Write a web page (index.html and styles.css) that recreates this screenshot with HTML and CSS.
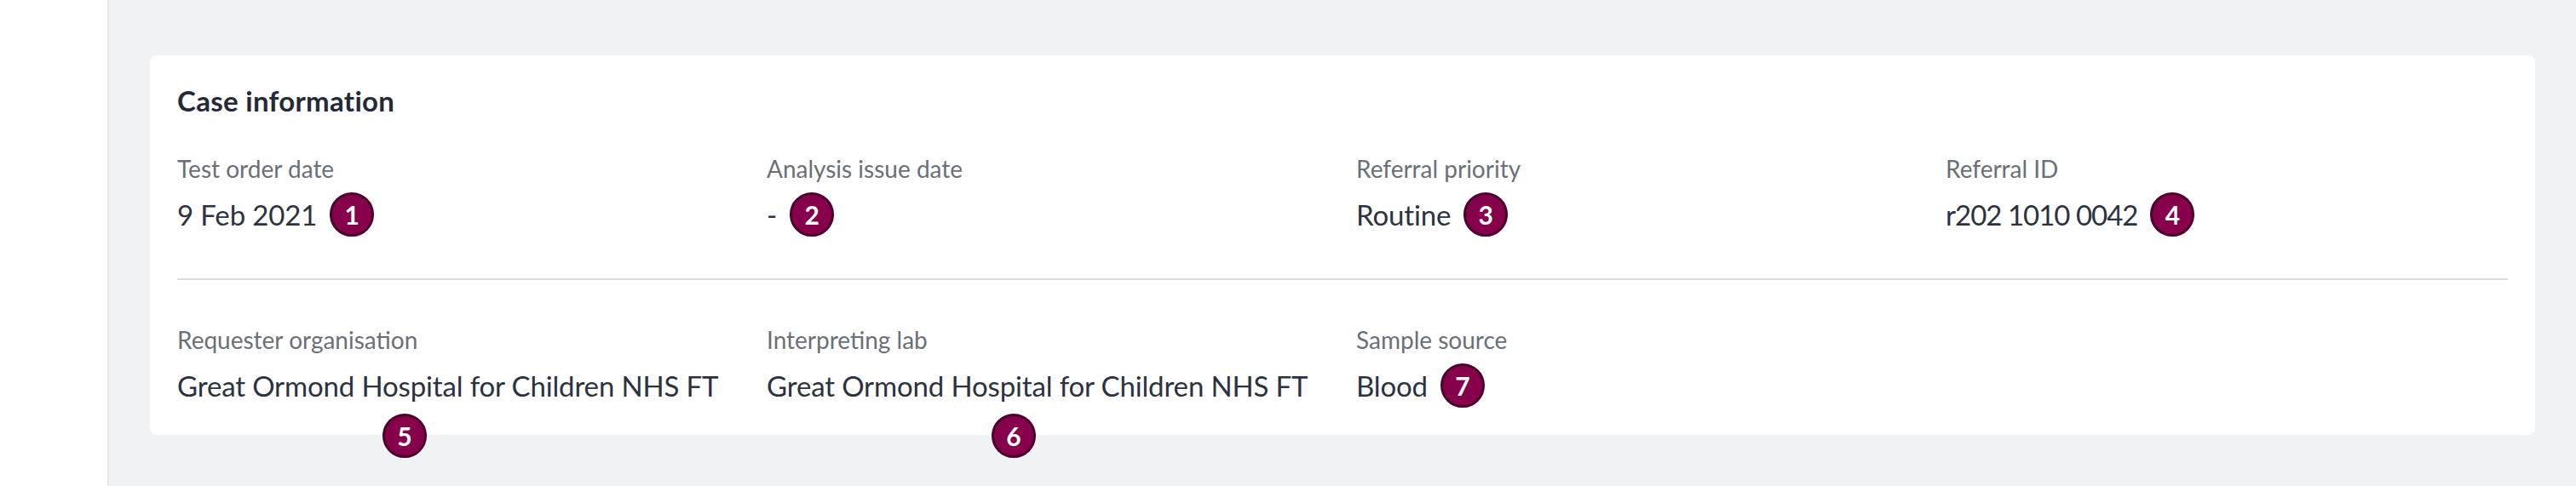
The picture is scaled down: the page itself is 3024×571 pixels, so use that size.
FILE: index.html
```html
<!DOCTYPE html>
<html>
  <head>
    <title>Case information</title>
    <link rel="stylesheet" href="styles.css">
  </head>
  <body>
    <div class="layout">
      <aside class="sidebar"></aside>
      <main class="content">
        <section class="card">
          <h2 class="card-title">Case information</h2>
          <div class="info-row">
            <div class="field">
              <div class="field-label">Test order date</div>
              <div class="field-value">9 Feb 2021 <span class="marker">1</span></div>
            </div>
            <div class="field">
              <div class="field-label">Analysis issue date</div>
              <div class="field-value">- <span class="marker">2</span></div>
            </div>
            <div class="field">
              <div class="field-label">Referral priority</div>
              <div class="field-value">Routine <span class="marker">3</span></div>
            </div>
            <div class="field">
              <div class="field-label">Referral ID</div>
              <div class="field-value num">r202 1010 0042 <span class="marker">4</span></div>
            </div>
          </div>
          <div class="info-row last">
            <div class="field">
              <div class="field-label">Requester organisation</div>
              <div class="field-value">Great Ormond Hospital for Children NHS FT <span class="marker below m5">5</span></div>
            </div>
            <div class="field">
              <div class="field-label">Interpreting lab</div>
              <div class="field-value">Great Ormond Hospital for Children NHS FT <span class="marker below m6">6</span></div>
            </div>
            <div class="field">
              <div class="field-label">Sample source</div>
              <div class="field-value">Blood <span class="marker">7</span></div>
            </div>
            <div class="field"></div>
          </div>
        </section>
      </main>
    </div>
  </body>
</html>
```

FILE: styles.css
```css
* {
  box-sizing: border-box;
}
body {
  margin: 0;
  font-family: Lato, "Noto Sans", sans-serif;
  color: #2c3240;
}
.layout {
  display: flex;
  min-height: 571px;
}
.sidebar {
  width: 128px;
  flex-shrink: 0;
  background: #ffffff;
  border-right: 2px solid #e3e5e6;
}
.content {
  flex: 1;
  background: #eff3f4;
  padding: 65px 48px 48px;
}
.card {
  background: #ffffff;
  border-radius: 8px;
  padding: 33px 32px 32px;
}
.card-title {
  margin: 0 0 42px;
  font-size: 33px;
  line-height: 40px;
  font-weight: 700;
  letter-spacing: 0.3px;
  color: #242a36;
}
.info-row {
  display: grid;
  grid-template-columns: repeat(4, 1fr);
  gap: 32px;
  padding-bottom: 49px;
  border-bottom: 2px solid #dcdcdc;
}
.info-row.last {
  padding-top: 52px;
  padding-bottom: 0;
  border-bottom: none;
}
.field-label {
  font-size: 28px;
  line-height: 36px;
  color: #6a6f78;
  margin-bottom: 10px;
}
.field-value {
  position: relative;
  display: flex;
  align-items: center;
  gap: 15px;
  font-size: 33px;
  line-height: 52px;
  letter-spacing: -0.15px;
  white-space: nowrap;
}
.field-value.num {
  letter-spacing: -1px;
}
    /* numbered callouts */
    .marker {
      display: inline-flex;
      align-items: center;
      justify-content: center;
      width: 52px;
      height: 52px;
      border-radius: 50%;
      background: #86004b;
      border: 3px solid #4c002d;
      color: #ffffff;
      font-size: 30px;
      font-weight: 700;
      letter-spacing: 0;
      line-height: 1;
    }
    .marker.below {
      position: absolute;
      top: calc(100% + 7px);
    }
    .marker.m5 {
      left: 241px;
    }
    .marker.m6 {
      left: 264px;
    }
```
